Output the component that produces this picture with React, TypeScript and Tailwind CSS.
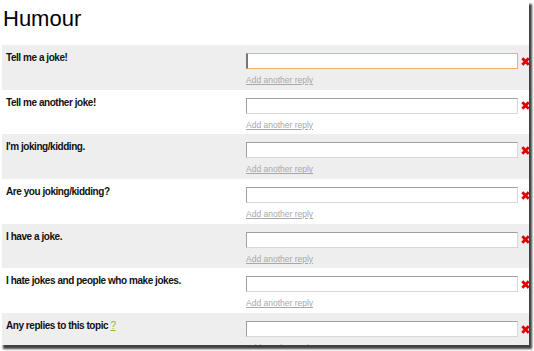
import React from 'react';

const rows = [
  'Tell me a joke!',
  'Tell me another joke!',
  "I'm joking/kidding.",
  'Are you joking/kidding?',
  'I have a joke.',
  'I hate jokes and people who make jokes.',
];

const RemoveIcon: React.FC = () => (
  <svg width="9" height="9" viewBox="0 0 9 9" className="shrink-0">
    <path d="M1.3 1.3 L7.7 7.7 M7.7 1.3 L1.3 7.7" stroke="#e00000" strokeWidth="2.8" strokeLinecap="butt" />
  </svg>
);

const Row: React.FC<{ label: React.ReactNode; shaded: boolean; focused?: boolean }> = ({ label, shaded, focused }) => (
  <div className={`flex h-[44.7px] shrink-0 ${shaded ? 'bg-[#eeeeee]' : 'bg-white'}`}>
    <div className="w-[244px] shrink-0 pl-[4px] pt-[6px] text-[10px] font-bold leading-[13px] tracking-[-0.45px] text-[#111]">
      {label}
    </div>
    <div className="flex flex-col pt-[8px]">
      <div className="flex items-center gap-[3px]">
        <input
          type="text"
          className={`h-[16px] w-[272px] bg-white outline-none ${
            focused
              ? 'border border-[#e2b766] border-l-[2px] border-l-[#777]'
              : 'border border-[#d8d8d8] border-t-[#a0a0a0] border-l-[#a0a0a0]'
          }`}
        />
        <RemoveIcon />
      </div>
      <a href="#" className="mt-[6px] text-[8.5px] leading-[10px] text-[#a8a8a8] underline">
        Add another reply
      </a>
    </div>
  </div>
);

const App: React.FC = () => {
  return (
    <div className="h-[351px] w-[534px] overflow-hidden bg-white" style={{ fontFamily: '"Liberation Sans", Arial, sans-serif' }}>
      <div className="flex h-[345px] w-[529px] flex-col overflow-hidden bg-white shadow-[3px_4px_2px_rgba(0,0,0,0.75)]">
        <h1 className="h-[45px] shrink-0 pl-[3px] pt-[6px] text-[22px] leading-[26px] text-black">Humour</h1>
        <div className="flex flex-col pl-[2px]">
          {rows.map((r, i) => (
            <Row key={r} label={r} shaded={i % 2 === 0} focused={i === 0} />
          ))}
          <Row
            shaded
            label={
              <>
                Any replies to this topic{' '}
                <a href="#" className="font-normal text-[#9ab52a] underline">?</a>
              </>
            }
          />
        </div>
      </div>
    </div>
  );
};

export default App;
